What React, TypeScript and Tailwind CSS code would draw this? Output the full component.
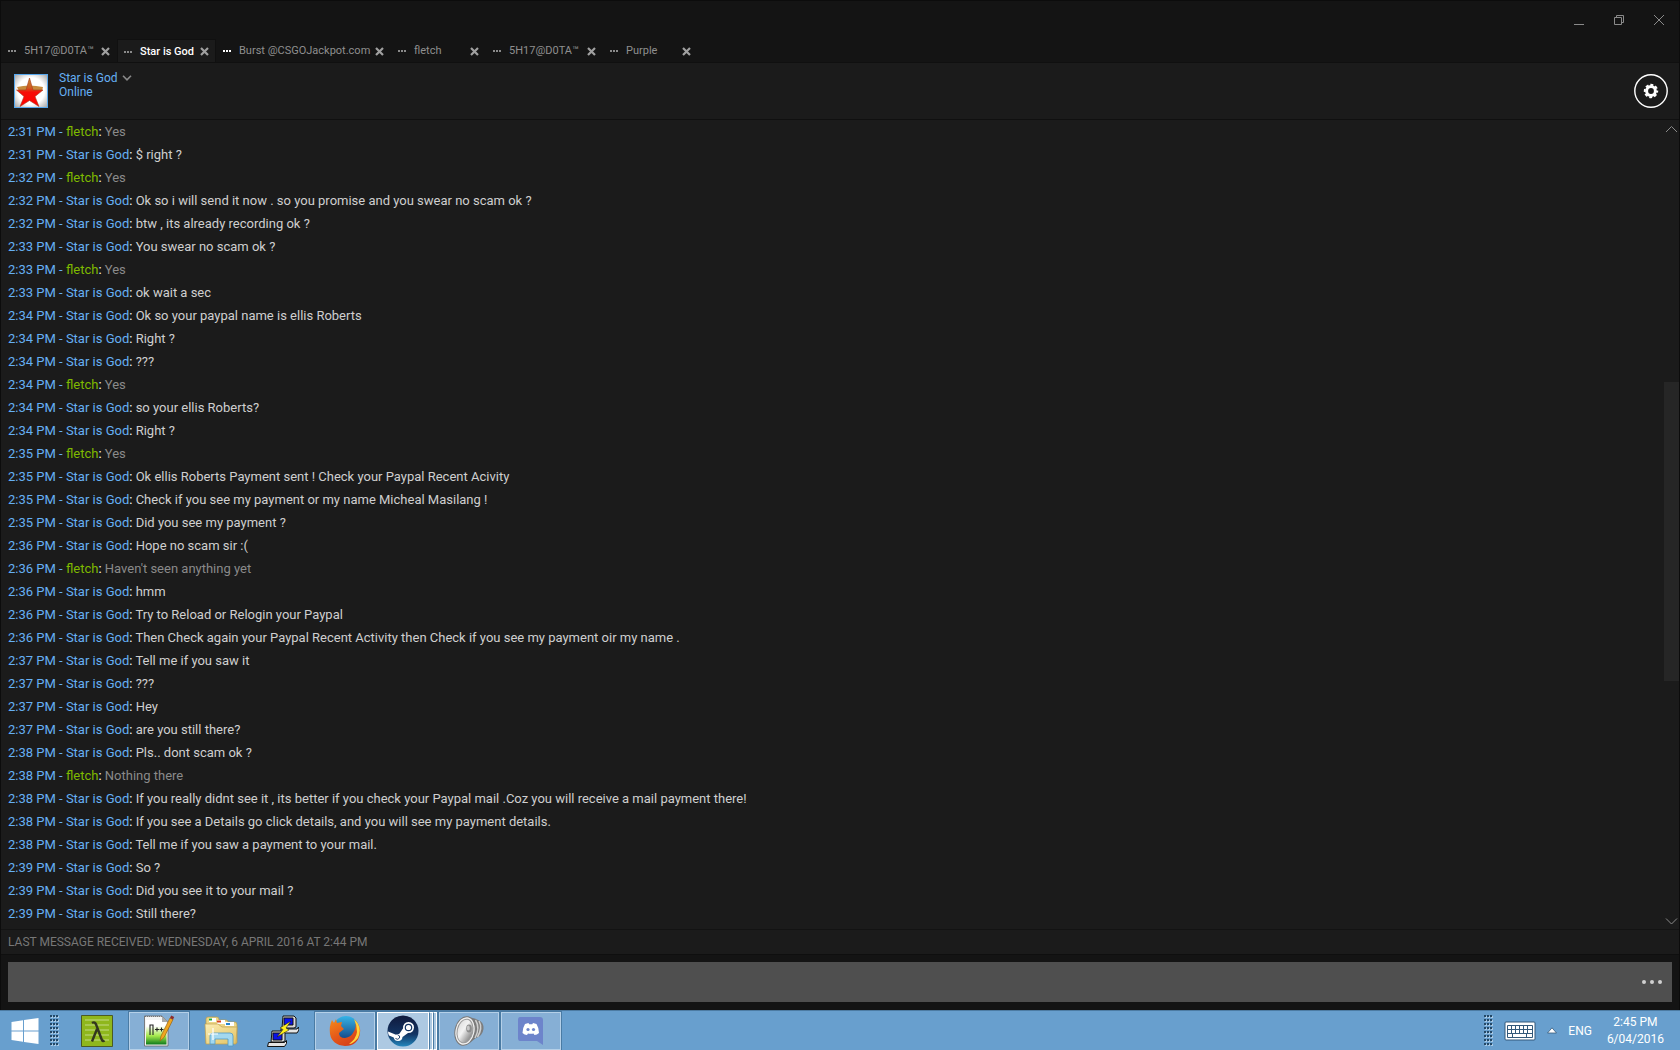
import clsx from "clsx";

interface ChatTab {
  id: number;
  name: string;
  width: string;
  active?: boolean;
  unread?: boolean;
}

interface Message {
  time: string;
  text: string;
  from?: "fletch";
}

const tabs: ChatTab[] = [
  { id: 1, name: "5H17@D0TA™", width: "w-[116px]" },
  { id: 2, name: "Star is God", width: "w-[99px]", active: true },
  { id: 3, name: "Burst @CSGOJackpot.com", width: "w-[175px]", unread: true },
  { id: 4, name: "fletch", width: "w-[95px]" },
  { id: 5, name: "5H17@D0TA™", width: "w-[117px]" },
  { id: 6, name: "Purple", width: "w-[95px]" },
];

const messages: Message[] = [
  { time: "2:31 PM", from: "fletch", text: "Yes" },
  { time: "2:31 PM", text: "$ right ?" },
  { time: "2:32 PM", from: "fletch", text: "Yes" },
  { time: "2:32 PM", text: "Ok so i will send it now . so you promise and you swear no scam ok ?" },
  { time: "2:32 PM", text: "btw , its already recording ok ?" },
  { time: "2:33 PM", text: "You swear no scam ok ?" },
  { time: "2:33 PM", from: "fletch", text: "Yes" },
  { time: "2:33 PM", text: "ok wait a sec" },
  { time: "2:34 PM", text: "Ok so your paypal name is ellis Roberts" },
  { time: "2:34 PM", text: "Right ?" },
  { time: "2:34 PM", text: "???" },
  { time: "2:34 PM", from: "fletch", text: "Yes" },
  { time: "2:34 PM", text: "so your ellis Roberts?" },
  { time: "2:34 PM", text: "Right ?" },
  { time: "2:35 PM", from: "fletch", text: "Yes" },
  { time: "2:35 PM", text: "Ok ellis Roberts Payment sent ! Check your Paypal Recent Acivity" },
  { time: "2:35 PM", text: "Check if you see my payment or my name Micheal Masilang !" },
  { time: "2:35 PM", text: "Did you see my payment ?" },
  { time: "2:36 PM", text: "Hope no scam sir :(" },
  { time: "2:36 PM", from: "fletch", text: "Haven't seen anything yet" },
  { time: "2:36 PM", text: "hmm" },
  { time: "2:36 PM", text: "Try to Reload or Relogin your Paypal" },
  { time: "2:36 PM", text: "Then Check again your Paypal Recent Activity then Check if you see my payment oir my name ." },
  { time: "2:37 PM", text: "Tell me if you saw it" },
  { time: "2:37 PM", text: "???" },
  { time: "2:37 PM", text: "Hey" },
  { time: "2:37 PM", text: "are you still there?" },
  { time: "2:38 PM", text: "Pls.. dont scam ok ?" },
  { time: "2:38 PM", from: "fletch", text: "Nothing there" },
  { time: "2:38 PM", text: "If you really didnt see it , its better if you check your Paypal mail .Coz you will receive a mail payment there!" },
  { time: "2:38 PM", text: "If you see a Details go click details, and you will see my payment details." },
  { time: "2:38 PM", text: "Tell me if you saw a payment to your mail." },
  { time: "2:39 PM", text: "So ?" },
  { time: "2:39 PM", text: "Did you see it to your mail ?" },
  { time: "2:39 PM", text: "Still there?" },
];

function WindowControls() {
  return (
    <div className="flex h-[38px] items-center justify-end gap-6 pr-3 text-[#8a8a8a]">
      <button aria-label="Minimize" className="size-4">
        <svg viewBox="0 0 16 16" className="size-4">
          <path d="M3 12.5h10" stroke="currentColor" />
        </svg>
      </button>
      <button aria-label="Restore" className="size-4">
        <svg viewBox="0 0 16 16" className="size-4" fill="none" stroke="currentColor">
          <path d="M3.5 5.5h7v7h-7zM5.5 5.5v-2h7v7h-2" />
        </svg>
      </button>
      <button aria-label="Close" className="size-4">
        <svg viewBox="0 0 16 16" className="size-4" stroke="currentColor">
          <path d="M3 3l10 10M13 3L3 13" />
        </svg>
      </button>
    </div>
  );
}

function Tab({ tab }: { tab: ChatTab }) {
  return (
    <div
      className={clsx(
        "flex h-6 items-center",
        tab.width,
        tab.active
          ? "border border-b-0 border-[#101010] bg-[#1b1b1b] pr-[6px] pl-[6px]"
          : "pr-[7px] pl-[7px]"
      )}
    >
      <button
        className={clsx(
          "flex flex-1 items-center gap-2 text-[11px] leading-4 whitespace-nowrap",
          tab.active ? "font-medium text-white" : "text-[#8f8f8f]"
        )}
      >
        <svg
          viewBox="0 0 8 2"
          className={clsx("h-[2px] w-2 shrink-0", tab.unread ? "text-white" : "text-[#8a8a8a]")}
          fill="currentColor"
        >
          <path d="M0 0h2v2H0zM3 0h2v2H3zM6 0h2v2H6z" />
        </svg>
        {tab.name}
      </button>
      <button aria-label={`Close ${tab.name}`} className="text-[#a0a0a0]">
        <svg viewBox="0 0 9 9" className="size-[9px]" stroke="currentColor" strokeWidth="2.2">
          <path d="M1 1l7 7M8 1L1 8" />
        </svg>
      </button>
    </div>
  );
}

function Avatar() {
  return (
    <svg viewBox="0 0 34 34" className="mt-[3px] size-[34px]">
      <defs>
        <radialGradient id="avatar-bg" r="0.7">
          <stop offset="0.6" stopColor="#fff" />
          <stop offset="1" stopColor="#a9a9a9" />
        </radialGradient>
        <linearGradient id="avatar-star" x1="0" y1="0" x2="0" y2="1">
          <stop offset="0" stopColor="#c98a35" />
          <stop offset="0.35" stopColor="#cf5a20" />
          <stop offset="0.5" stopColor="#f60d08" />
          <stop offset="1" stopColor="#f00" />
        </linearGradient>
      </defs>
      <path d="M0 0h34v34H0z" fill="#57a8ee" />
      <path d="M1 1h32v32H1z" fill="url(#avatar-bg)" />
      <path d="M3 13q12-3 26 0l-1 4H5z" fill="#c78b3d" />
      <path d="M15.500 4l3.500 12h10l-8 6.500 4 10-9.500-6-9.500 6 4-10-7.500-6.500h9.500z" fill="url(#avatar-star)" stroke="#a53a20" strokeWidth="0.6" />
    </svg>
  );
}

function ContactHeader() {
  return (
    <header className="flex h-[58px] items-start border-y border-[#101010] pt-2 pr-[11px] pl-[13px]">
      <Avatar />
      <div className="ml-[11px] flex-1 text-[12px] leading-[14px] text-[#66b0f4]">
        <h1 className="flex items-center gap-1">
          Star is God
          <button aria-label="Friend menu" className="text-[#8a8a8a]">
            <svg viewBox="0 0 10 6" className="h-[6px] w-[10px]" fill="none" stroke="currentColor" strokeWidth="1.6">
              <path d="M1 0.8l4 4 4-4" />
            </svg>
          </button>
        </h1>
        <p>Online</p>
      </div>
      <button aria-label="Settings" className="mt-[3px] text-white">
        <svg viewBox="0 0 34 34" className="size-[34px]" fill="none" stroke="currentColor">
          <circle cx="17" cy="17" r="16.2" strokeWidth="1.4" />
          <circle cx="17" cy="17" r="4.4" strokeWidth="3" />
          <circle cx="17" cy="17" r="6.2" strokeWidth="2" strokeDasharray="2.9 1.97" strokeDashoffset="1.4" />
        </svg>
      </button>
    </header>
  );
}

function MessageRow({ message }: { message: Message }) {
  const mine = message.from === "fletch";

  return (
    <li className="text-[13px] leading-[23px] text-[#66b0f4]">
      {message.time} - <span className={clsx(mine && "text-[#7fb900]")}>{message.from ?? "Star is God"}</span>
      <span className="text-white">:</span>{" "}
      <span className={mine ? "text-[#8a8a8a]" : "text-[#cfcfcf]"}>{message.text}</span>
    </li>
  );
}

function ScrollBar() {
  return (
    <div className="flex w-[15px] flex-col items-center text-[#8a8a8a]">
      <svg viewBox="0 0 15 16" className="h-4 w-[15px]" fill="none" stroke="currentColor">
        <path d="M2 12l5.500-5.500L13 12" />
      </svg>
      <div className="flex w-full flex-1 flex-col">
        <div className="grow-[246]" />
        <div className="w-full grow-[299] bg-[#262626]" />
        <div className="grow-[232]" />
      </div>
      <svg viewBox="0 0 15 16" className="h-4 w-[15px]" fill="none" stroke="currentColor">
        <path d="M2 5.500L7.500 11 13 5.500" />
      </svg>
    </div>
  );
}

function Composer() {
  return (
    <form className="border-t border-[#0f0f0f] bg-[#141414] px-[7px] pt-[7px] pb-2">
      <div className="flex h-10 items-center bg-[#4f4f4f] pr-[10px]">
        <input aria-label="Message" className="h-full flex-1 bg-transparent px-2 text-[13px] text-[#cfcfcf] outline-none" />
        <button type="button" aria-label="Emoticons" className="text-[#d0d0d0]">
          <svg viewBox="0 0 20 4" className="h-1 w-5" fill="currentColor">
            <circle cx="2" cy="2" r="2" />
            <circle cx="10" cy="2" r="2" />
            <circle cx="18" cy="2" r="2" />
          </svg>
        </button>
      </div>
    </form>
  );
}

function Grip() {
  return (
    <svg viewBox="0 0 9 31" className="h-[31px] w-[9px]">
      {[0, 4, 8, 12, 16, 20, 24, 28].map((y) => (
        <g key={y}>
          <path d={`M1 ${y + 1}h2v2h-2zM4 ${y + 1}h2v2h-2zM7 ${y + 1}h2v2h-2z`} fill="#a9c9e4" />
          <path d={`M0 ${y}h2v2h-2zM3 ${y}h2v2h-2zM6 ${y}h2v2h-2z`} fill="#244866" />
        </g>
      ))}
    </svg>
  );
}

function WindowsIcon() {
  return (
    <svg viewBox="0 0 28 26" className="h-[26px] w-7" fill="#fff">
      <path d="M0.5 4L12 2.3v10.2H0.5zM13 2.1L27.5 0v12.5H13zM0.5 13.5H12v10.2L0.5 22zM13 13.5h14.5V26L13 23.9z" />
    </svg>
  );
}

function LambdaIcon() {
  return (
    <svg viewBox="0 0 32 32" className="size-8">
      <path d="M0.5 0.5h31v31h-31z" fill="#8fb71c" stroke="#4b5a24" />
      <path d="M4 5h24M4 10h24M4 15h24M4 20h24M4 25h24" stroke="#a9c951" strokeWidth="2" />
      <path d="M11 8q3-2 4.500 2.500l5 13.500q1 3 3 1.500M16 14l-5 12.500" fill="none" stroke="#33361f" strokeWidth="2.4" />
    </svg>
  );
}

function NotepadIcon() {
  return (
    <svg viewBox="0 0 32 32" className="size-8">
      <defs>
        <linearGradient id="npp" x1="0" y1="0" x2="0" y2="1">
          <stop offset="0.25" stopColor="#fff" />
          <stop offset="0.65" stopColor="#a4e84a" />
          <stop offset="1" stopColor="#0c7a1c" />
        </linearGradient>
      </defs>
      <path d="M1.500 1h17.500l6 6v24H1.500z" fill="#f4f4f4" stroke="#666" strokeWidth="0.8" />
      <path d="M3 5h16l4.500 3v21.500H3z" fill="url(#npp)" />
      <path d="M2 1.500h17" stroke="#777" strokeDasharray="1 1" />
      <path d="M19 1v6h6z" fill="#aaa" />
      <path d="M7 20V10h3v10M12 14.500h4M14 12.500v4M16.500 14.500h4M18.500 12.500v4" fill="none" stroke="#222" strokeWidth="1.1" />
      <path d="M17 26l1-5 9-18 3 1.500-9 18z" fill="#f0a520" stroke="#9a6514" strokeWidth="0.7" />
      <path d="M27 3l1.200-2.500 3 1.500-1.200 2.500z" fill="#8d2d2d" />
    </svg>
  );
}

function FolderIcon() {
  return (
    <svg viewBox="0 0 34 32" className="h-8 w-[34px]">
      <defs>
        <linearGradient id="folder" x1="0" y1="0" x2="1" y2="1">
          <stop offset="0" stopColor="#fbeeb5" />
          <stop offset="1" stopColor="#e3c262" />
        </linearGradient>
      </defs>
      <path d="M2 4q0-2 2-2h9q2 0 2 3h7q2 0 2 2h7q2 0 2 3v18H2z" fill="#ecd687" stroke="#b79b4b" strokeWidth="0.7" />
      <path d="M5 3h7v4H5zM13 5h8v4h-8zM21 7h9v4h-9z" fill="#fff" />
      <path d="M5 3.500h3v2H5z" fill="#1fa83c" />
      <path d="M13 5.500h4v2h-4z" fill="#d8461e" />
      <path d="M22 8h4v2h-4z" fill="#2385cf" />
      <path d="M1 9h13l4 3h15l-1 17H2z" fill="url(#folder)" stroke="#c2a14f" strokeWidth="0.7" />
      <path d="M6 29v-8q0-3 3-3h17q3 0 3 3v10h-5v-7H11v5z" fill="#a3d8ef" stroke="#4f9bc6" strokeWidth="0.8" />
      <path d="M9 13v12M4 19h10" stroke="#fff" strokeWidth="1.2" />
    </svg>
  );
}

function PuttyIcon() {
  return (
    <svg viewBox="0 0 32 32" className="size-8" stroke="#111">
      <path d="M16 1h11l2 2v9l-2 1H15z" fill="#d8d8d8" />
      <path d="M17 3h9v7h-9z" fill="#0a12e8" />
      <path d="M14 14h16l1.500-2 .5 3-2 3H14z" fill="#e4e4e4" />
      <path d="M5 16h11l2 2v8l-2 1H4z" fill="#d8d8d8" />
      <path d="M6 18h9v7H6z" fill="#0a12e8" />
      <path d="M1.500 27.500h16l2-2v3l-2 3h-17z" fill="#e4e4e4" />
      <path d="M24 6l-11 7 3 1.500-6 7.500 12-7-3-2z" fill="#ffef1c" strokeWidth="0.5" />
    </svg>
  );
}

function FirefoxIcon() {
  return (
    <svg viewBox="0 0 32 32" className="size-8">
      <defs>
        <linearGradient id="fox" x1="0" y1="0" x2="0.6" y2="1">
          <stop offset="0" stopColor="#f58a1b" />
          <stop offset="0.6" stopColor="#e4571a" />
          <stop offset="1" stopColor="#d5401a" />
        </linearGradient>
        <linearGradient id="globe" x1="0" y1="0" x2="0" y2="1">
          <stop offset="0" stopColor="#35b4e8" />
          <stop offset="1" stopColor="#123a7b" />
        </linearGradient>
      </defs>
      <circle cx="17" cy="14" r="13" fill="url(#globe)" />
      <path d="M26 5q6 6 5 13-2 13-15 13Q3 30 1 19 0 11 3 5l2 3 2-4 1 4 5-1-1 4 3 3-5 4q0 5 6 5 6-1 8-5 4-5 2-13z" fill="url(#fox)" />
      <path d="M25 4q9 8 4 19-5 6-9 6 7-5 8-12 0-7-3-13z" fill="#ffd43a" />
    </svg>
  );
}

function SteamIcon() {
  return (
    <svg viewBox="0 0 32 32" className="size-8">
      <defs>
        <linearGradient id="steam" x1="0" y1="0" x2="0" y2="1">
          <stop offset="0" stopColor="#101a3c" />
          <stop offset="0.6" stopColor="#123463" />
          <stop offset="1" stopColor="#2487bd" />
        </linearGradient>
      </defs>
      <circle cx="16" cy="16" r="15.500" fill="url(#steam)" />
      <path d="M1 16.500l8 3.200q1.500-1 3.200-.7l3.800-5.500q0-6.500 5.500-6.500 5.500.5 5.500 5.500-.5 5.500-6 5.500l-5.500 4q-.3 4-4.500 4-3.500 0-4.300-3.500l-4.700-1.900q-1-2-1-4.100z" fill="#fff" />
      <circle cx="21.500" cy="12.500" r="3.200" fill="#fff" stroke="#123463" strokeWidth="1.2" />
      <path d="M8.500 23.500q2.500 1.800 4-.5 1-2.500-2-3.300" fill="none" stroke="#123463" strokeWidth="0.9" />
    </svg>
  );
}

function SpeakerIcon() {
  return (
    <svg viewBox="0 0 32 32" className="size-8">
      <defs>
        <linearGradient id="cone" x1="0" y1="0" x2="1" y2="0.6">
          <stop offset="0" stopColor="#d9d9d9" />
          <stop offset="0.5" stopColor="#f2f2f2" />
          <stop offset="1" stopColor="#8d8d8d" />
        </linearGradient>
      </defs>
      <path d="M14 2q8 1 11 3 6 2 5.500 9-1 7-7.500 9l-8 6z" fill="#7c7c7c" />
      <path d="M22.500 5q5 8-.5 18M26 6q4 7-1.500 16" fill="none" stroke="#d0d0d0" strokeWidth="1.500" />
      <ellipse cx="12" cy="16" rx="10" ry="14.500" fill="#efefef" stroke="#777" transform="rotate(12 12 16)" />
      <ellipse cx="12" cy="16" rx="7.800" ry="12" fill="url(#cone)" stroke="#9a9a9a" transform="rotate(12 12 16)" />
      <ellipse cx="16" cy="13.500" rx="2.800" ry="4" fill="#8b8b8b" />
      <ellipse cx="15.300" cy="13" rx="1.500" ry="2.500" fill="#c9c9c9" />
    </svg>
  );
}

function DiscordIcon() {
  return (
    <svg viewBox="0 0 28 30" className="h-[30px] w-7">
      <path d="M3 1h20q3 0 3 3v25l-6-4H3q-2 0-2-3V4q0-3 2-3z" fill="#6d84cb" />
      <path d="M5.500 17q0-5 2.500-9l3.500-1 .7 1.300h3.100L16 7l3.500 1q2.500 4 2.500 9-2 1.800-4.500 2l-1-1.500q-2.700.6-5.500 0L10 19q-2.500-.2-4.500-2z" fill="#fff" />
      <circle cx="11" cy="13.500" r="1.600" fill="#6d84cb" />
      <circle cx="16.500" cy="13.500" r="1.600" fill="#6d84cb" />
    </svg>
  );
}

const plainButton = "flex h-[38px] w-[60px] items-center justify-center";
const openButton = `${plainButton} border border-[#b5d0e8] bg-[#86afd5] outline outline-[#4a7ba4]`;

function Taskbar() {
  return (
    <footer className="flex h-10 items-center overflow-hidden border-t border-[#4c7ba3] bg-[#689fce] text-white">
      <button aria-label="Start" className="flex w-[50px] items-center justify-center">
        <WindowsIcon />
      </button>
      <Grip />
      <nav className="ml-2 flex items-center gap-[2px]">
        <button aria-label="Lambda" className={plainButton}>
          <LambdaIcon />
        </button>
        <button aria-label="Notepad++" className={openButton}>
          <NotepadIcon />
        </button>
        <button aria-label="File Explorer" className={plainButton}>
          <FolderIcon />
        </button>
        <button aria-label="PuTTY" className={plainButton}>
          <PuttyIcon />
        </button>
        <button aria-label="Firefox" className={openButton}>
          <FirefoxIcon />
        </button>
        <button aria-label="Steam" className="flex h-[38px] w-[60px] outline outline-[#4a7ba4]">
          <span className="flex h-full flex-1 items-center justify-center border border-white bg-[#adc9e2]">
            <SteamIcon />
          </span>
          <span className="h-full w-1 border border-y-white border-r-white border-l-[#4a7ba4] bg-[#adc9e2]" />
          <span className="h-full w-1 border border-y-white border-r-white border-l-[#4a7ba4] bg-[#adc9e2]" />
        </button>
        <button aria-label="Volume" className={openButton}>
          <SpeakerIcon />
        </button>
        <button aria-label="Discord" className={openButton}>
          <DiscordIcon />
        </button>
      </nav>
      <div className="ml-auto flex items-center pr-4 text-[12px]">
        <Grip />
        <button aria-label="Touch keyboard" className="ml-[11px]">
          <svg viewBox="0 0 32 20" className="h-5 w-8">
            <rect x="1" y="1" width="30" height="18" rx="1" fill="#fff" stroke="#33597a" />
            <path d="M3.500 4.500h25v12h-25zM3.500 8.500h25M3.500 12.500h25M7.500 4.500v8M11.500 4.500v8M15.500 4.500v8M19.500 4.500v8M23.500 4.500v8M8.500 12.500v4M22.500 12.500v4" fill="none" stroke="#33597a" />
          </svg>
        </button>
        <button aria-label="Show hidden icons" className="ml-[11px]">
          <svg viewBox="0 0 10 7" className="h-[7px] w-[10px]">
            <path d="M5 0.800L9.500 6h-9z" fill="#fff" stroke="#33597a" strokeWidth="0.8" />
          </svg>
        </button>
        <button className="ml-[11px]">ENG</button>
        <time className="ml-[15px] text-center leading-[17px]">
          2:45 PM
          <br />
          6/04/2016
        </time>
      </div>
    </footer>
  );
}

export default function App() {
  return (
    <div className="flex min-h-screen flex-col bg-[#1b1b1b] font-[Roboto,'Noto_Sans',sans-serif]">
      <div className="flex flex-1 flex-col border-x border-t border-[#0c0c0c]">
        <div className="bg-[#141414]">
          <WindowControls />
          <div className="flex h-[23px]">
            {tabs.map((tab) => (
              <Tab key={tab.id} tab={tab} />
            ))}
          </div>
        </div>
        <ContactHeader />
        <main className="flex flex-1">
          <ul className="flex-1 pl-[7px]">
            {messages.map((message, i) => (
              <MessageRow key={i} message={message} />
            ))}
          </ul>
          <ScrollBar />
        </main>
        <p className="border-t border-[#131313] pl-[7px] text-[12px] leading-6 text-[#777777] uppercase">
          Last message received: Wednesday, 6 April 2016 at 2:44 PM
        </p>
        <Composer />
      </div>
      <Taskbar />
    </div>
  );
}
